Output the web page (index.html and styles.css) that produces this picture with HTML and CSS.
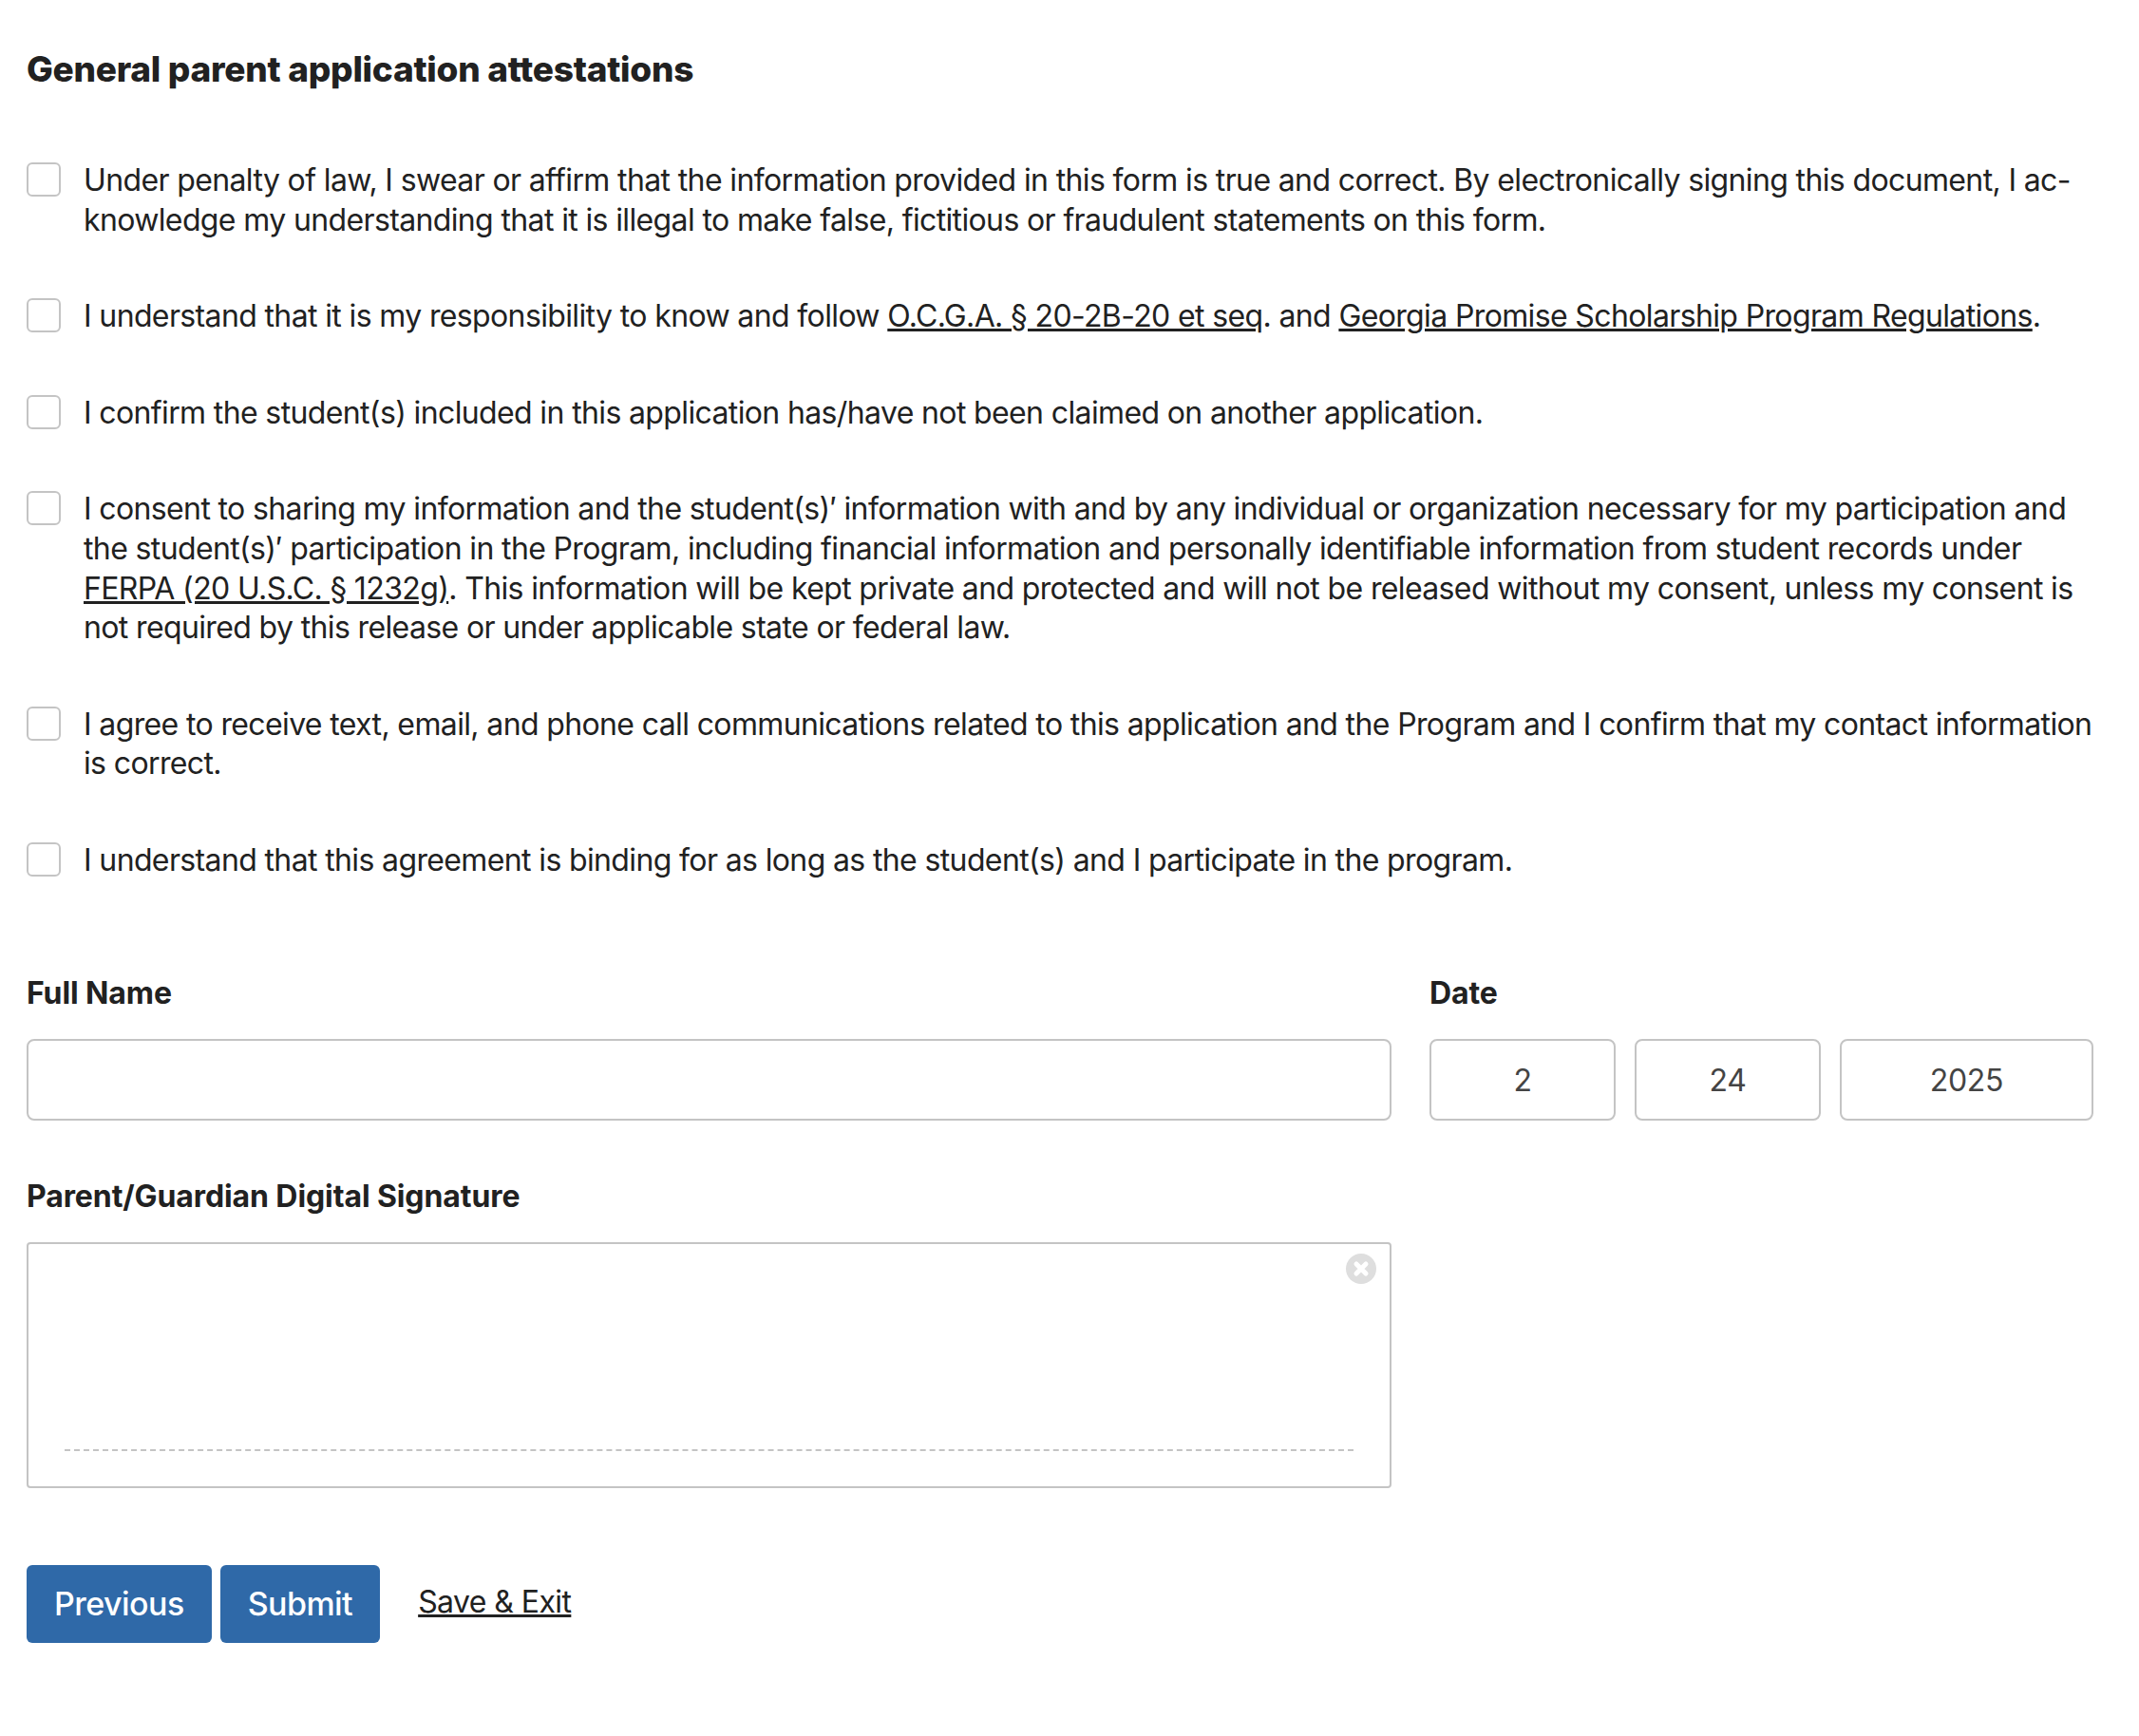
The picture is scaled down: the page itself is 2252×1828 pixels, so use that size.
FILE: index.html
```html
<!DOCTYPE html>
<html lang="en">
<head>
<meta charset="utf-8">
<title>General parent application attestations</title>
<link rel="stylesheet" href="styles.css">
</head>
<body>
<main class="page">
  <h2 class="title">General parent application attestations</h2>
  <div class="checks">
    <label class="check"><span class="box"></span><span class="check-text">Under penalty of law, I swear or affirm that the information provided in this form is true and correct. By electronically signing this document, I ac-<br>knowledge my understanding that it is illegal to make false, fictitious or fraudulent statements on this form.</span></label>
    <label class="check"><span class="box"></span><span class="check-text">I understand that it is my responsibility to know and follow <a href="#">O.C.G.A. § 20-2B-20 et seq</a>. and <a href="#">Georgia Promise Scholarship Program Regulations</a>.</span></label>
    <label class="check"><span class="box"></span><span class="check-text">I confirm the student(s) included in this application has/have not been claimed on another application.</span></label>
    <label class="check"><span class="box"></span><span class="check-text">I consent to sharing my information and the student(s)′ information with and by any individual or organization necessary for my participation and<br>the student(s)′ participation in the Program, including financial information and personally identifiable information from student records under<br><a href="#">FERPA (20 U.S.C. § 1232g)</a>. This information will be kept private and protected and will not be released without my consent, unless my consent is<br>not required by this release or under applicable state or federal law.</span></label>
    <label class="check"><span class="box"></span><span class="check-text">I agree to receive text, email, and phone call communications related to this application and the Program and I confirm that my contact information<br>is correct.</span></label>
    <label class="check"><span class="box"></span><span class="check-text">I understand that this agreement is binding for as long as the student(s) and I participate in the program.</span></label>
  </div>
  <div class="fields">
    <div class="field">
      <div class="label">Full Name</div>
      <div class="input"></div>
    </div>
    <div class="field">
      <div class="label">Date</div>
      <div class="date">
        <div class="input part">2</div>
        <div class="input part">24</div>
        <div class="input part year">2025</div>
      </div>
    </div>
    <div class="field">
      <div class="label">Parent/Guardian Digital Signature</div>
      <div class="sign">
        <svg class="clear" viewBox="0 0 32 32" aria-hidden="true"><circle cx="16" cy="16" r="16" fill="#dedede"/><path d="M11 11l10 10M21 11L11 21" stroke="#fff" stroke-width="5" stroke-linecap="round"/></svg>
        <div class="sign-line"></div>
      </div>
    </div>
  </div>
  <div class="actions">
    <button class="btn" type="button">Previous</button>
    <button class="btn" type="button">Submit</button>
    <a class="save" href="#">Save &amp; Exit</a>
  </div>
</main>
</body>
</html>
```
FILE: styles.css
```css
* { box-sizing: border-box; }
html, body { margin: 0; background: #fff; }
body { font-family: Inter, "Liberation Sans", sans-serif; color: #212121; }
.page { width: 2176px; margin-left: 28px; padding-top: 50px; }
.title { margin: 0; font-size: 37px; line-height: 46px; font-weight: 800; letter-spacing: -0.26px; }
.checks { display: flex; flex-direction: column; gap: 60px; margin-top: 73px; }
.check { display: flex; gap: 24px; font-size: 32px; line-height: 41.6px; letter-spacing: -0.63px; }
.box { flex: none; width: 36px; height: 36px; margin-top: 2px; border: 2px solid #c4c4c4; border-radius: 6px; background: #fff; }
.check-text { white-space: nowrap; }
.check-text a, .save { color: #212121; text-decoration: underline; }
.fields { display: grid; grid-template-columns: 1437px 699px; column-gap: 40px; row-gap: 59px; margin-top: 98px; }
.label { font-size: 32px; line-height: 41px; font-weight: 700; letter-spacing: -0.1px; margin-bottom: 28px; }
.input { height: 86px; border: 2px solid #c4c4c4; border-radius: 8px; background: #fff; }
.date { display: grid; grid-template-columns: 196px 196px 267px; column-gap: 20px; }
.part { display: flex; align-items: center; justify-content: center; padding-top: 2px; font-size: 32px; letter-spacing: -0.3px; color: #444; }
.sign { position: relative; height: 259px; border: 2px solid #c4c4c4; border-radius: 4px; padding: 216px 38px 0; }
.sign-line { border-top: 2px dashed #c4c4c4; }
.clear { position: absolute; top: 10px; right: 14px; width: 32px; height: 32px; }
.actions { display: flex; align-items: center; gap: 9px; margin-top: 81px; padding-bottom: 97px; }
.btn { height: 82px; padding: 0 29px; border: 0; border-radius: 6px; background: #2f69a8; color: #fff; font: 500 34px Inter, sans-serif; letter-spacing: -0.55px; }
.save { margin-left: 31px; font-size: 32px; line-height: 40px; letter-spacing: -0.58px; margin-top: -4px; }
```
